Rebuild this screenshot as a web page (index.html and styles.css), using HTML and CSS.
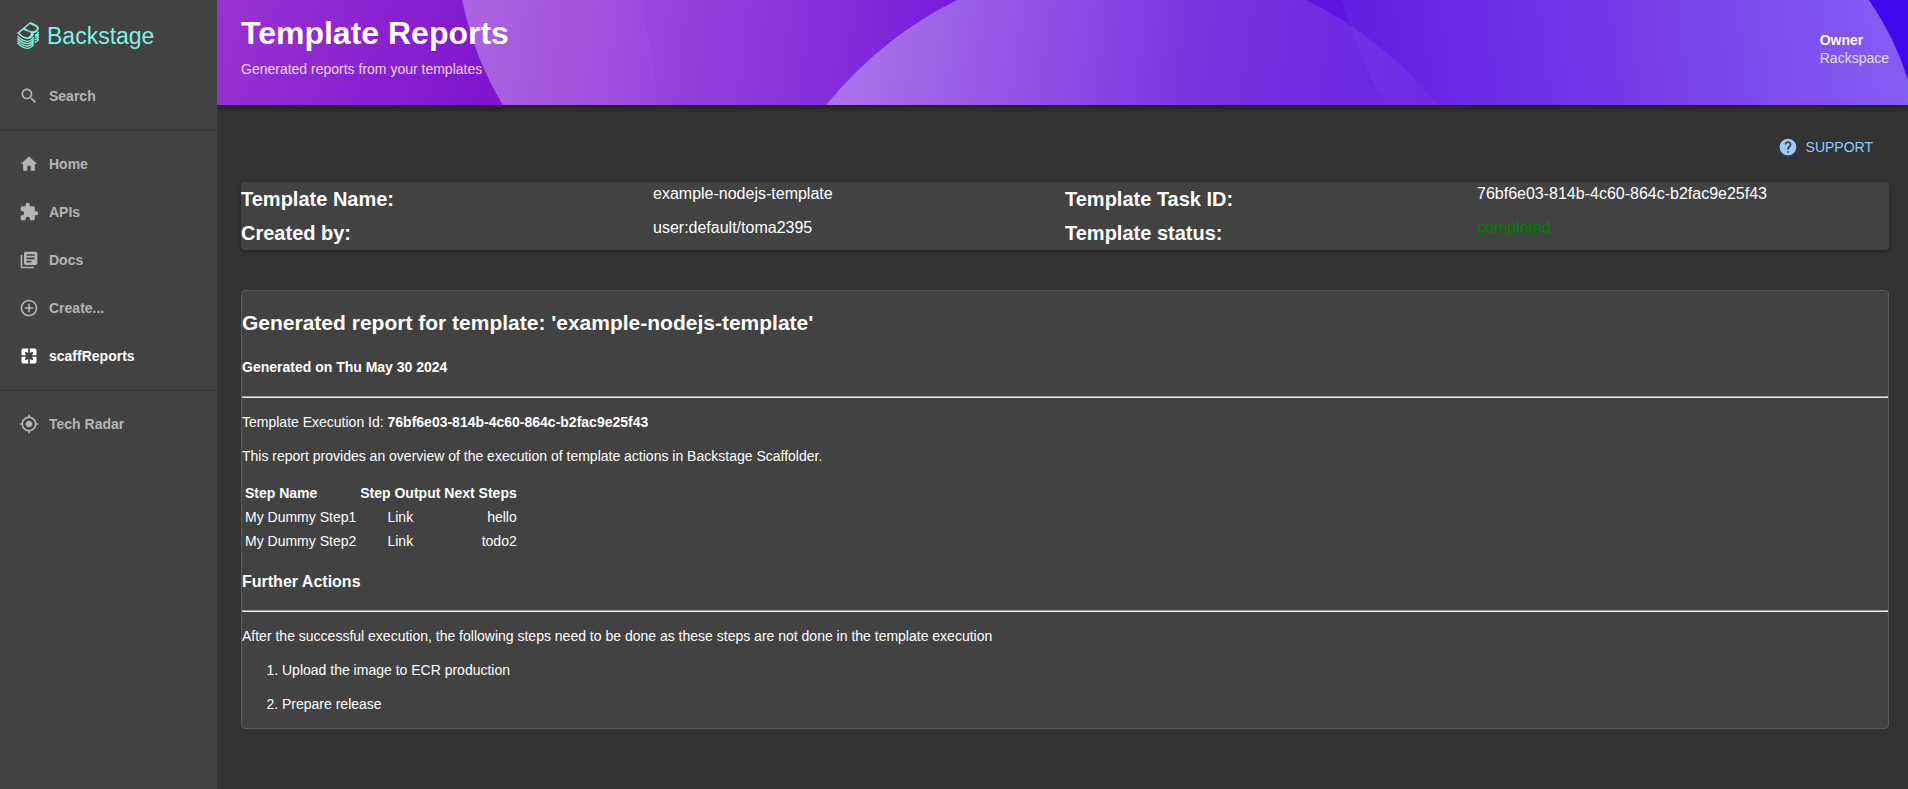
FILE: index.html
```html
<!DOCTYPE html>
<html lang="en">
<head>
<meta charset="utf-8">
<title>Template Reports</title>
<link rel="stylesheet" href="styles.css">
</head>
<body>
<div class="app">
  <nav class="sidebar" aria-label="Main">
    <a class="logo" href="#">
      <svg class="logo-mark" viewBox="0 0 66 84" aria-hidden="true">
        <path fill="currentColor" fill-rule="evenodd" d="M0 33 37 2Q40 0 43 1L60 10Q68 15 64 24Q60 33 51 33Q50 42 43 48Q36 53 26 50Q12 46 0 33ZM7 33Q15 42 26 45Q34 47 38 42Q44 36 41 33Q36 29 29 28L19 23ZM24 19 39 6 56 14Q61 17 59 22Q56 28 49 28Q36 28 24 19Z"/>
        <g fill="none" stroke="currentColor" stroke-width="4">
          <path d="M1 42Q18 59 32 58Q44 57 50 45"/>
          <path d="M1 49Q18 66 32 65Q44 64 50 52"/>
          <path d="M1 56Q18 73 32 72Q44 71 50 59"/>
          <path d="M1 63Q18 80 32 79Q44 78 50 66"/>
          <path d="M53 40Q62 38 65 29M53 47Q62 45 65 36M53 54Q62 52 65 43M53 61Q62 59 65 50"/>
        </g>
      </svg>
      <span>Backstage</span>
    </a>
    <a class="item" href="#"><svg class="icon" viewBox="0 0 24 24"><path d="M15.5 14h-.79l-.28-.27C15.41 12.59 16 11.11 16 9.5 16 5.91 13.09 3 9.5 3S3 5.91 3 9.5 5.91 16 9.5 16c1.61 0 3.09-.59 4.23-1.57l.27.28v.79l5 4.99L20.49 19l-4.99-5zm-6 0C7.01 14 5 11.99 5 9.5S7.01 5 9.5 5 14 7.01 14 9.5 11.99 14 9.5 14z"/></svg>Search</a>
    <hr class="divider">
    <a class="item" href="#"><svg class="icon" viewBox="0 0 24 24"><path d="M10 20v-6h4v6h5v-8h3L12 3 2 12h3v8z"/></svg>Home</a>
    <a class="item" href="#"><svg class="icon" viewBox="0 0 24 24"><path d="M20.5 11H19V7c0-1.1-.9-2-2-2h-4V3.5C13 2.12 11.88 1 10.5 1S8 2.12 8 3.5V5H4c-1.1 0-1.99.9-1.99 2v3.8H3.5c1.49 0 2.7 1.21 2.7 2.7s-1.21 2.7-2.7 2.7H2V20c0 1.1.9 2 2 2h3.8v-1.5c0-1.49 1.21-2.7 2.7-2.7 1.49 0 2.7 1.21 2.7 2.7V22H17c1.1 0 2-.9 2-2v-4h1.5c1.38 0 2.5-1.12 2.5-2.5S21.88 11 20.5 11z"/></svg>APIs</a>
    <a class="item" href="#"><svg class="icon" viewBox="0 0 24 24"><path d="M4 6H2v14c0 1.1.9 2 2 2h14v-2H4V6zm16-4H8c-1.1 0-2 .9-2 2v12c0 1.1.9 2 2 2h12c1.1 0 2-.9 2-2V4c0-1.1-.9-2-2-2zm-1 9H9V9h10v2zm-4 4H9v-2h6v2zm4-8H9V5h10v2z"/></svg>Docs</a>
    <a class="item" href="#"><svg class="icon" viewBox="0 0 24 24"><path d="M13 7h-2v4H7v2h4v4h2v-4h4v-2h-4V7zm-1-5C6.48 2 2 6.48 2 12s4.48 10 10 10 10-4.48 10-10S17.52 2 12 2zm0 18c-4.41 0-8-3.59-8-8s3.59-8 8-8 8 3.59 8 8-3.59 8-8 8z"/></svg>Create...</a>
    <a class="item active" href="#" aria-current="page"><svg class="icon" viewBox="0 0 24 24"><path d="M3 5v6h5L7 7l4 1V3H5c-1.1 0-2 .9-2 2zm5 8H3v6c0 1.1.9 2 2 2h6v-5l-4 1 1-4zm9 4l-4-1v5h6c1.1 0 2-.9 2-2v-6h-5l1 4zm2-14h-6v5l4-1-1 4h5V5c0-1.1-.9-2-2-2z"/></svg>scaffReports</a>
    <hr class="divider">
    <a class="item" href="#"><svg class="icon" viewBox="0 0 24 24"><path d="M12 8c-2.21 0-4 1.79-4 4s1.79 4 4 4 4-1.79 4-4-1.79-4-4-4zm8.94 3c-.46-4.17-3.77-7.48-7.94-7.94V1h-2v2.06C6.83 3.52 3.52 6.83 3.06 11H1v2h2.06c.46 4.17 3.77 7.48 7.94 7.94V23h2v-2.06c4.17-.46 7.48-3.77 7.94-7.94H23v-2h-2.06zM12 19c-3.87 0-7-3.13-7-7s3.13-7 7-7 7 3.13 7 7-3.13 7-7 7z"/></svg>Tech Radar</a>
  </nav>

  <div class="page">
    <header class="banner">
      <svg class="waves" viewBox="0 0 1691 105" preserveAspectRatio="none" aria-hidden="true">
        <defs>
          <linearGradient id="base" gradientUnits="userSpaceOnUse" x1="0" y1="0" x2="300" y2="105">
            <stop offset="0" stop-color="#9a33d3"/><stop offset="1" stop-color="#7c12cf"/>
          </linearGradient>
          <linearGradient id="left" gradientUnits="userSpaceOnUse" x1="245" y1="0" x2="735" y2="60">
            <stop offset="0" stop-color="#aa60de"/><stop offset=".4" stop-color="#9644dc"/><stop offset=".72" stop-color="#8532da"/><stop offset="1" stop-color="#751bdb"/>
          </linearGradient>
          <linearGradient id="mid" gradientUnits="userSpaceOnUse" x1="640" y1="20" x2="1200" y2="105">
            <stop offset="0" stop-color="#aa71e8"/><stop offset=".22" stop-color="#9a5ae6"/><stop offset=".62" stop-color="#7a31e0"/><stop offset="1" stop-color="#6b26e3"/>
          </linearGradient>
          <linearGradient id="right" gradientUnits="userSpaceOnUse" x1="1150" y1="70" x2="1680" y2="0">
            <stop offset="0" stop-color="#661ee2"/><stop offset=".5" stop-color="#753ce9"/><stop offset="1" stop-color="#845df3"/>
          </linearGradient>
        </defs>
        <path fill="url(#base)" d="M0 0H300V105H0z"/>
        <path fill="url(#left)" d="M245 0Q258 60 286 105H760V0z"/>
        <path fill="#fff" fill-opacity=".03" d="M245 0Q258 60 286 105H440Q438 52 423 0z"/>
        <path fill="#5f14e0" d="M1080 0H1300V105H1080z"/>
        <path fill="#3f08ee" d="M1600 0H1691V105H1600z"/>
        <path fill="url(#right)" d="M1125 0Q1140 58 1175 105H1691V80Q1678 38 1652 0z"/>
        <path fill="url(#mid)" d="M609 105Q665 37 740 0H1089Q1166 38 1220 105z"/>
        <path fill="#fff" fill-opacity=".03" d="M1134 25Q1187 62 1220 105H1169Q1145 65 1134 25z"/>
      </svg>
      <div>
        <h1 class="title">Template Reports</h1>
        <p class="subtitle">Generated reports from your templates</p>
      </div>
      <dl class="owner">
        <dt>Owner</dt>
        <dd>Rackspace</dd>
      </dl>
    </header>

    <main class="content">
      <div class="toolbar">
        <button class="support" type="button"><svg class="icon" viewBox="0 0 24 24"><path d="M12 2C6.48 2 2 6.48 2 12s4.48 10 10 10 10-4.48 10-10S17.52 2 12 2zm1 17h-2v-2h2v2zm2.07-7.75l-.9.92C13.45 12.9 13 13.5 13 15h-2v-.5c0-1.1.45-2.1 1.17-2.83l1.24-1.26c.37-.36.59-.86.59-1.41 0-1.1-.9-2-2-2s-2 .9-2 2H8c0-2.21 1.79-4 4-4s4 1.79 4 4c0 .88-.36 1.68-.93 2.25z"/></svg>SUPPORT</button>
      </div>

      <dl class="summary">
        <dt>Template Name:</dt><dd>example-nodejs-template</dd>
        <dt>Template Task ID:</dt><dd>76bf6e03-814b-4c60-864c-b2fac9e25f43</dd>
        <dt>Created by:</dt><dd>user:default/toma2395</dd>
        <dt>Template status:</dt><dd class="done">completed</dd>
      </dl>

      <article class="report">
        <h2>Generated report for template: 'example-nodejs-template'</h2>
        <h4>Generated on Thu May 30 2024</h4>
        <hr>
        <p>Template Execution Id: <strong>76bf6e03-814b-4c60-864c-b2fac9e25f43</strong></p>
        <p>This report provides an overview of the execution of template actions in Backstage Scaffolder.</p>
        <table>
          <thead><tr><th>Step Name</th><th>Step Output</th><th>Next Steps</th></tr></thead>
          <tbody>
            <tr><td>My Dummy Step1</td><td>Link</td><td>hello</td></tr>
            <tr><td>My Dummy Step2</td><td>Link</td><td>todo2</td></tr>
          </tbody>
        </table>
        <h3>Further Actions</h3>
        <hr>
        <p>After the successful execution, the following steps need to be done as these steps are not done in the template execution</p>
        <ol>
          <li>Upload the image to ECR production</li>
          <li>Prepare release</li>
        </ol>
      </article>
    </main>
  </div>
</div>
</body>
</html>
```
FILE: styles.css
```css
* { box-sizing: border-box; }

body {
  margin: 0;
  background: #333;
  color: #fff;
  font: 14px/20px "Helvetica Neue", "Liberation Sans", Arial, sans-serif;
}

.app { display: flex; min-height: 100vh; }

.sidebar {
  position: relative;
  z-index: 1;
  flex: none;
  width: 217px;
  background: #424242;
}

.logo {
  display: flex;
  align-items: center;
  gap: 8px;
  height: 72px;
  padding-left: 17px;
  color: #7df3e1;
  font-size: 23px;
  text-decoration: none;
}
.logo-mark { width: 22px; height: 28px; }

.item {
  display: flex;
  align-items: center;
  gap: 10px;
  height: 48px;
  padding-left: 19px;
  color: #b5b5b5;
  font-weight: bold;
  text-decoration: none;
}
.item.active { color: #fff; }
.icon { width: 20px; height: 20px; fill: currentColor; }

.divider {
  height: 1px;
  margin: 10px 0 9px;
  border: 0;
  background: #383838;
}

.page { flex: 1; min-width: 0; }

.banner {
  position: relative;
  z-index: 0;
  display: flex;
  align-items: center;
  justify-content: space-between;
  min-height: 105px;
  padding: 12px 19px 20px 24px;
  box-shadow: 0 2px 8px rgba(0, 0, 0, .5);
}
.waves {
  position: absolute;
  z-index: -1;
  inset: 0;
  width: 100%;
  height: 100%;
}
.title { margin: 0 0 8px; font-size: 32px; line-height: 36px; }
.subtitle { margin: 0 0 4px; opacity: .8; }
.owner { margin: 0; line-height: 18px; }
.owner dt { font-weight: bold; }
.owner dd { margin: 0; opacity: .8; }

.content { padding: 24px 19px 24px 24px; }

.toolbar { display: flex; justify-content: flex-end; margin-bottom: 17px; }
.support {
  display: flex;
  align-items: center;
  gap: 8px;
  padding: 8px 16px;
  border: 0;
  background: none;
  color: #9cc9ff;
  font: inherit;
}

.summary {
  display: grid;
  grid-template-columns: repeat(4, 1fr);
  grid-auto-rows: 34px;
  margin: 0 0 40px;
  border-radius: 4px;
  background: #424242;
  box-shadow: 0 2px 4px rgba(0, 0, 0, .35);
}
.summary dt { font-size: 20px; font-weight: bold; line-height: 34px; }
.summary dd { margin: 0; font-size: 16px; line-height: 24px; }
.summary .done { color: #008000; }

.report {
  border: 1px solid #5a5a5a;
  border-radius: 4px;
  background: #424242;
}
.report h2 { margin: 17px 0 19px; font-size: 21px; line-height: 30px; }
.report h4 { margin: 19px 0; font-size: 14px; }
.report h3 { margin: 16px 0; font-size: 16px; line-height: 24px; }
.report hr { margin: 0; border: 1px solid; border-color: #9a9a9a #eee #eee #9a9a9a; }
.report p { margin: 14px 0; }
.report th:first-child { text-align: left; }
.report td:nth-child(2) { text-align: center; }
.report td:nth-child(3) { text-align: right; }
.report ol { margin: 14px 0; padding-left: 40px; }
.report li + li { margin-top: 14px; }
```
